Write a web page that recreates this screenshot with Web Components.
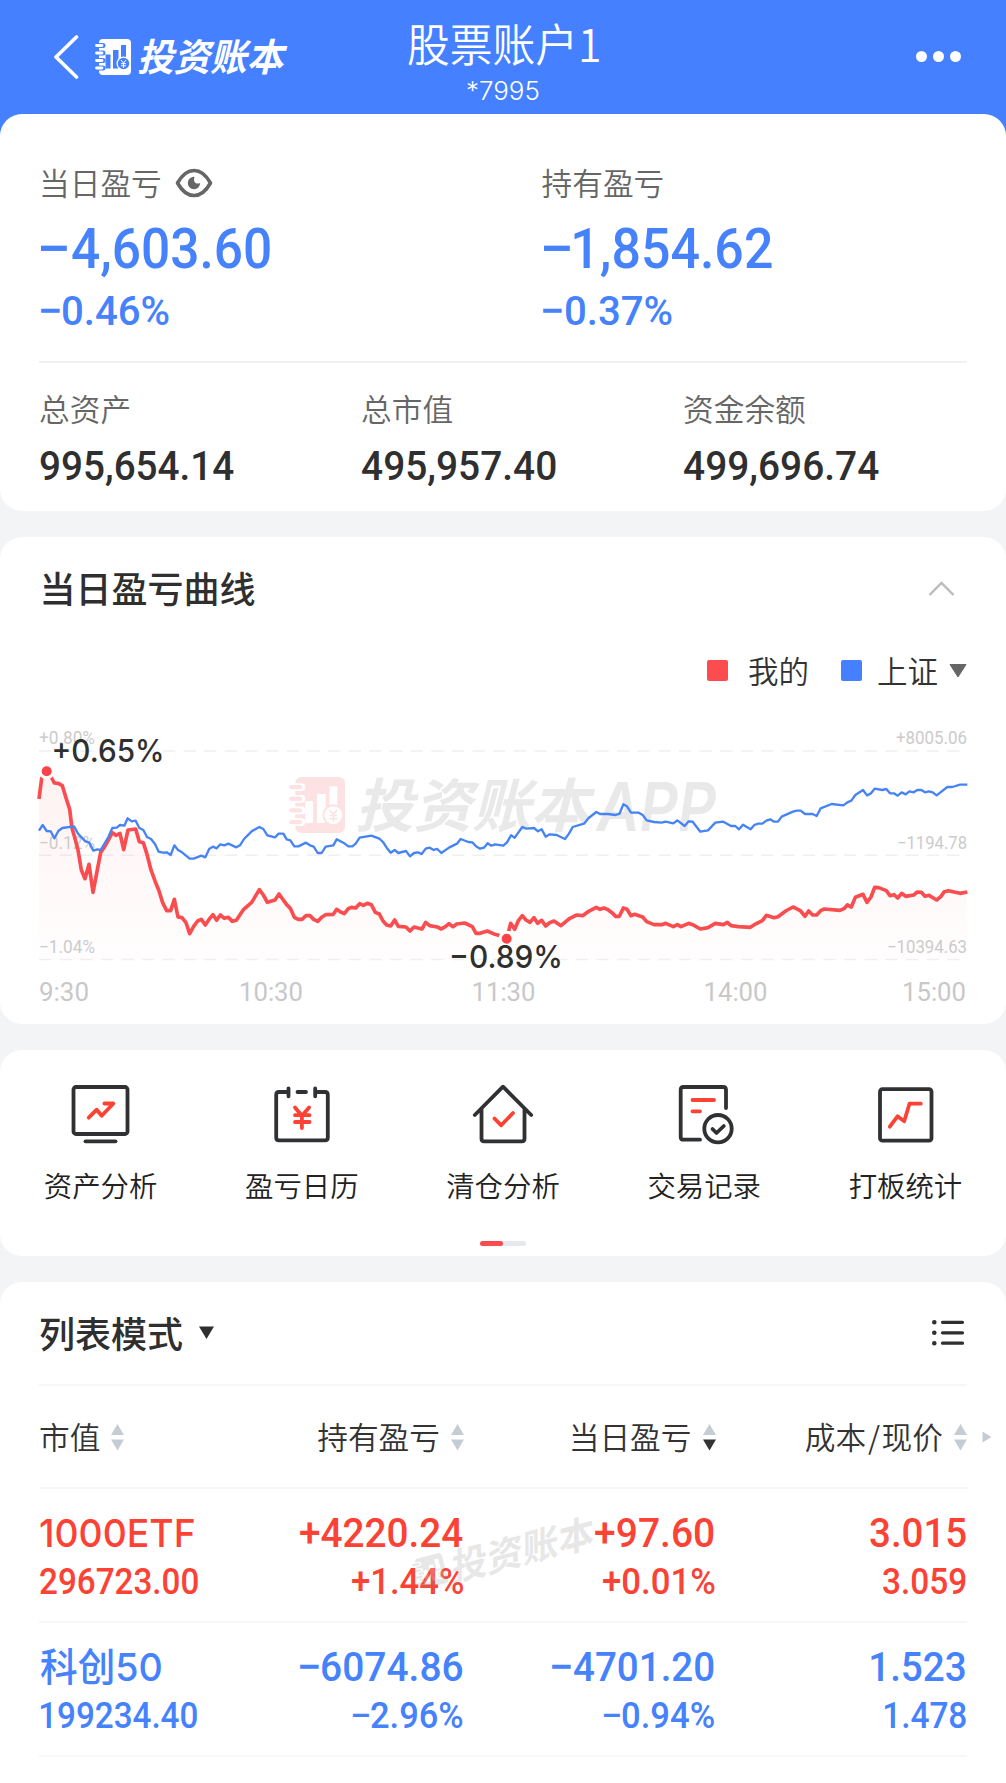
<!DOCTYPE html>
<html lang="zh-CN">
<head>
<meta charset="utf-8">
<title>投资账本</title>
<style>
html,body{margin:0;padding:0}
body{width:1006px;height:1783px;overflow:hidden;background:#f2f4f6;color:#333;
  font-family:"Noto Sans CJK SC",sans-serif;
  --blue:#4480ff;--num-blue:#4582fb;--red:#fb4235;--line:#f7f7f9;--num:Roboto,"Noto Sans CJK SC",sans-serif}
</style>
</head>
<body>
<ledger-page></ledger-page>
<script>
const define=(name,html,setup)=>{
  const tpl=document.createElement('template');
  tpl.innerHTML=html;
  customElements.define(name,class extends HTMLElement{
    connectedCallback(){
      if(this.shadowRoot)return;
      this.attachShadow({mode:'open'}).append(tpl.content.cloneNode(true));
      if(setup)setup(this,this.shadowRoot);
    }
  });
};

/* Text whose inked width equals the "w" attribute, at "s" pixels and weight "b".
   A leading minus is stretched on its own so that it stays wide beside narrow digits. */
const ctx=document.createElement('canvas').getContext('2d');
class FitText extends HTMLElement{
  connectedCallback(){
    if(this.shadowRoot)return;
    const s=+this.getAttribute('s'),w=+this.getAttribute('w'),b=this.getAttribute('b')||500;
    const fam=this.getAttribute('f')||'Roboto',h=this.getAttribute('h')||s;
    const style=this.hasAttribute('italic')?'italic':'normal';
    const text=this.getAttribute('text');
    ctx.font=`${style} ${b} ${s}px ${fam}, "Noto Sans CJK SC", sans-serif`;
    const root=this.attachShadow({mode:'open'});
    root.innerHTML=`<style>:host{display:flex;width:${w}px;height:${h}px;line-height:${h}px;white-space:nowrap;flex:none}
      span{flex:none;font-family:${fam},"Noto Sans CJK SC",sans-serif;font-size:${s}px;font-weight:${b};font-style:${style};line-height:inherit;transform-origin:0 50%}</style>`;
    const part=(t,width,gap)=>{
      const m=ctx.measureText(t),left=-m.actualBoundingBoxLeft||0;
      const k=width/(m.actualBoundingBoxRight+m.actualBoundingBoxLeft);
      const e=document.createElement('span');
      e.textContent=t;
      e.style.width=width+gap+'px';
      e.style.transform=`scaleX(${k}) translateX(${-left}px)`;
      root.append(e);
    };
    if(text[0]==='−'){
      const dash=s*.475,gap=s*.075;
      part('−',dash,gap);
      part(text.slice(1),w-dash-gap,0);
    }else part(text,w,0);
  }
}
customElements.define('fit-text',FitText);

define('book-icon',`<style>:host{display:block;flex:none}svg{display:block;width:100%;height:100%;overflow:visible}</style>
<svg viewBox="0 0 36 36">
 <rect x="4" y="0" width="32" height="36" rx="4" fill="currentColor"/>
 <g fill="none" stroke="var(--hole)" stroke-width="5"><path d="M3 6.5h5M3 14h5M3 21.500h5M3 29h5" stroke-linecap="round"/></g>
 <path d="M1.500 6.500h5.500M1.500 14h5.500M1.500 21.500h5.500M1.500 29h5.500" stroke="currentColor" stroke-width="2.800" stroke-linecap="round"/>
 <path d="M10.500 15.500h5v14h-5zM18 11h5.500v18.500h-5.500zM26 6h5v12h-5z" fill="var(--hole)"/>
 <circle cx="28.500" cy="24.500" r="7" fill="currentColor"/><circle cx="28.500" cy="24.500" r="5.700" fill="var(--hole)"/>
 <path d="M26 21l2.500 3 2.500-3M28.500 24v5M26 24.700h5M26 26.800h5" fill="none" stroke="currentColor" stroke-width="1"/>
</svg>`);

define('app-header',`<style>
:host{display:grid;grid-template-columns:1fr auto 1fr;height:114px;background:var(--blue);color:#fff}
.l{display:flex;align-items:center;padding-left:53px;height:113px}
.back{width:26px;height:44px;margin-right:16px;flex:none}
book-icon{width:36px;height:36px;--hole:var(--blue);margin-right:7px}
.c{display:flex;flex-direction:column;align-items:center}
.c fit-text:first-of-type{margin-top:21px}.c fit-text:last-of-type{margin-top:19px}
.r{display:flex;justify-content:flex-end;align-items:center;gap:6px;height:113px;padding-right:45px}
i{width:11px;height:11px;border-radius:50%;background:#fff}
</style>
<div class="l"><svg class="back" viewBox="0 0 26 44" fill="none" stroke="#fff" stroke-width="3.600" stroke-linecap="round" stroke-linejoin="round"><path d="M23.500 2L3 22l20.500 20"/></svg>
<book-icon></book-icon><fit-text text="投资账本" s="38" w="150" b="700" italic h="44" f="Noto Sans CJK SC" style="margin-top:-4px"></fit-text></div>
<div class="c"><fit-text text="股票账户1" s="45" w="191" b="350" h="44" f="Noto Sans CJK SC"></fit-text><fit-text text="*7995" s="25" w="72" b="300" h="14" f="Inter"></fit-text></div>
<div class="r"><i></i><i></i><i></i></div>`);

define('panel-card',`<style>:host{display:flex;flex-direction:column;background:#fff;border-radius:22px;box-sizing:border-box;flex:none}</style><slot></slot>`);

define('field-label',`<style>:host{display:block;font:350 30.700px/44px "Noto Sans CJK SC",sans-serif;color:#666;white-space:nowrap;margin-left:-1px}</style><slot></slot>`);

define('asset-summary',`<style>
:host{display:block;background:linear-gradient(var(--blue) 50%,transparent 50%)}
panel-card{height:397px;padding:46px 39px 0}
.two{display:grid;grid-template-columns:502.500px 1fr;padding-left:1px;height:201px;color:var(--num-blue)}
.lab{display:flex;align-items:center;gap:13px;height:44px}
.eye{width:38px;height:30px;display:block;margin-top:2px}
.big{margin:19.500px 0 0 1px}.pct{margin:15.500px 0 0 .500px}
.three{border-top:2px solid #f0f1f3;display:grid;grid-template-columns:322px 322px 1fr;padding:23px 0 0 1px;color:#2f2f2f}
.three fit-text{margin-top:14px}
</style>
<panel-card>
 <div class="two">
  <div><div class="lab"><field-label>当日盈亏</field-label><svg class="eye" viewBox="0 0 38 30"><path d="M2.500 15C7 7 12.500 2.500 19 2.500S31 7 35.500 15C31 23 25.500 27.500 19 27.500S7 23 2.500 15z" fill="none" stroke="#666" stroke-width="3.600" stroke-linejoin="round"/><path d="M19.500 8.800a6.200 6.200 0 1 0 5.700 6.200q-4 1.500-5.500-.800-1.300-2.200-.200-5.400z" fill="#666"/></svg></div>
   <fit-text class="big" text="−4,603.60" s="56" w="228.500" h="50"></fit-text><fit-text class="pct" text="−0.46%" s="41" w="128.500" h="44"></fit-text></div>
  <div><div class="lab"><field-label>持有盈亏</field-label></div>
   <fit-text class="big" text="−1,854.62" s="56" w="228.500" h="50"></fit-text><fit-text class="pct" text="−0.37%" s="41" w="128.500" h="44"></fit-text></div>
 </div>
 <div class="three">
  <div><field-label>总资产</field-label><fit-text text="995,654.14" s="41" w="194" h="44"></fit-text></div>
  <div><field-label>总市值</field-label><fit-text text="495,957.40" s="41" w="194" h="44"></fit-text></div>
  <div><field-label>资金余额</field-label><fit-text text="499,696.74" s="41" w="195" h="44"></fit-text></div>
 </div>
</panel-card>`);

const RED='117,297 125,235 140,214 152,228 163,249 175,250 187,257 197,290 209,328 216,385 224,412 234,450 244,510 255,536 267,493 279,577 302,457 314,440 325,420 337,398 348,406 360,400 371,449 384,390 407,387 418,425 430,428 441,463 453,510 465,543 476,570 488,608 500,632 512,632 523,598 534,651 546,653 558,668 569,701 581,679 593,663 604,658 616,675 628,657 639,644 650,661 661,645 673,655 685,652 697,664 709,661 731,628 755,607 778,569 790,585 802,607 825,600 837,582 860,614 871,625 883,652 895,658 906,658 918,647 930,647 941,658 953,664 965,652 977,644 1000,643 1010,628 1022,636 1033,641 1045,626 1054,622 1067,624 1079,611 1090,616 1102,610 1114,614 1126,637 1138,642 1149,663 1160,675 1172,678 1184,660 1195,679 1218,681 1230,693 1242,681 1266,687 1277,667 1289,677 1312,681 1324,687 1336,680 1347,671 1359,680 1370,672 1394,669 1417,680 1428,700 1440,700 1462,693 1485,703 1500,707 1520,716 1532,670 1544,688 1555,662 1567,647 1578,660 1590,667 1602,653 1613,670 1625,661 1637,678 1649,668 1662,663 1683,677 1708,656 1730,645 1748,647 1766,634 1789,622 1800,628 1812,624 1824,629 1836,638 1847,649 1858,649 1870,624 1881,628 1893,647 1904,643 1928,651 1940,665 1962,674 1985,674 1997,670 2020,680 2032,674 2043,680 2066,670 2078,674 2101,687 2124,683 2146,670 2170,674 2182,667 2193,677 2215,680 2251,682 2263,674 2287,662 2299,646 2322,653 2334,650 2357,633 2379,621 2402,633 2415,649 2426,633 2438,645 2450,645 2462,632 2473,627 2520,631 2532,626 2542,615 2554,621 2566,592 2589,583 2601,607 2613,591 2624,562 2636,563 2659,572 2670,587 2682,584 2693,594 2705,580 2717,589 2741,585 2752,576 2764,577 2775,589 2787,586 2810,600 2823,589 2833,575 2845,572 2880,580 2902,576';
const BLUE='117,392 128,375 140,393 152,394 163,415 175,393 187,384 222,379 234,401 256,424 268,428 280,452 292,448 302,450 325,411 337,384 350,383 360,375 373,377 383,355 395,364 407,362 418,384 430,390 441,411 453,417 465,432 476,455 488,458 500,457 512,465 523,436 534,450 546,457 569,476 581,476 604,467 616,472 628,446 639,440 650,445 661,433 673,436 685,431 709,442 720,436 732,417 755,394 778,381 790,387 802,406 825,412 836,401 850,401 860,418 871,421 883,439 895,439 918,428 930,436 941,440 953,459 965,459 977,440 1000,436 1010,418 1033,430 1045,439 1057,439 1067,431 1079,413 1114,407 1138,416 1149,426 1160,443 1172,458 1184,450 1195,459 1218,453 1230,469 1242,459 1254,457 1265,462 1277,446 1289,443 1301,450 1312,447 1324,459 1347,443 1371,431 1382,417 1405,426 1417,427 1428,439 1440,446 1452,443 1463,430 1474,437 1486,433 1510,437 1521,427 1533,406 1544,413 1567,381 1579,386 1602,384 1614,394 1625,388 1637,410 1649,403 1670,405 1695,417 1707,401 1718,381 1752,371 1766,354 1789,336 1800,342 1824,342 1847,345 1858,342 1870,313 1881,319 1893,338 1916,338 1928,345 1940,361 1962,366 1985,368 1997,365 2020,370 2032,361 2054,378 2066,364 2078,365 2101,395 2124,391 2146,368 2170,365 2193,378 2206,378 2217,388 2229,374 2252,388 2263,375 2275,371 2287,371 2299,362 2311,358 2322,365 2334,365 2345,350 2379,335 2391,332 2402,332 2415,342 2438,342 2450,348 2462,325 2495,312 2530,316 2542,307 2554,302 2566,285 2589,270 2601,286 2613,280 2624,266 2647,270 2659,267 2670,280 2682,280 2693,287 2705,277 2717,283 2728,274 2741,277 2752,270 2764,270 2775,277 2787,274 2798,277 2810,286 2842,261 2857,261 2880,254 2902,254';

define('line-chart',`<style>
:host{display:block;position:relative;width:1006px;height:310px}
svg{display:block;position:absolute;inset:0}
.mark{position:absolute;left:289px;top:76px;display:flex;align-items:center;gap:13px;color:#e9e9ea}
.mark book-icon{width:56px;height:56px;color:#fde2e4;--hole:#fff}
.ax{font:400 18px Roboto,sans-serif;fill:#cbcbcb}
.tm{font:400 26px Roboto,sans-serif;fill:#c8c8c8}
.tip{font:450 31px Inter,sans-serif;fill:#2f2f2f}
</style>
<div class="mark"><book-icon></book-icon><fit-text text="投资账本" s="58" w="238" b="700" italic h="56" f="Noto Sans CJK SC" style="margin-top:-7px"></fit-text><fit-text text="APP" s="68" w="122" b="600" italic h="56" f="Inter" style="margin:2px 0 0 -14px"></fit-text></div>
<svg width="1006" height="310" viewBox="0 0 1006 310">
 <defs><linearGradient id="g" gradientUnits="userSpaceOnUse" x1="0" y1="214" x2="0" y2="778"><stop offset="0" stop-color="#fb4d50" stop-opacity=".075"/><stop offset="1" stop-color="#fb4d50" stop-opacity=".008"/></linearGradient></defs>
 <g stroke="#f0f0f0" stroke-width="1.500" stroke-dasharray="12.400 8.240"><path d="M39 51H967M39 155.300H967M39 259.500H967"/></g>
 <g transform="scale(.33333)" fill="none">
  <polygon id="area" fill="url(#g)"/>
 </g>
 <g class="ax"></g>
 <g transform="scale(.33333)" fill="none" stroke-linejoin="round">
  <polyline id="red" stroke="#f94d50" stroke-width="11"/>
  <polyline id="blue" stroke="#4683f5" stroke-width="7"/>
  <g fill="#fb4248" stroke="#fff" stroke-width="9"><circle cx="140" cy="214" r="19.500"/><circle cx="1520" cy="716" r="19.500"/></g>
 </g>
 <g class="tm"></g><g class="tip"></g>
</svg>`,(el,r)=>{
  r.getElementById('red').setAttribute('points',RED);
  r.getElementById('blue').setAttribute('points',BLUE);
  r.getElementById('area').setAttribute('points',RED+' 2902,778 117,778');
  const put=(cls,list)=>list.forEach(([s,x,y,w])=>{
    const t=document.createElementNS('http://www.w3.org/2000/svg','text');
    t.setAttribute('x',x);t.setAttribute('y',y);t.setAttribute('textLength',w);
    t.setAttribute('lengthAdjust','spacingAndGlyphs');t.textContent=s;
    r.querySelector(cls).append(t);
  });
  put('.ax',[['+0.80%',39,44,56],['−0.12%',39,148.500,56],['−1.04%',39,253,56],['+8005.06',896,44,71],['−1194.78',897,148.500,70],['−10394.63',887,253,80]]);
  put('.tm',[['9:30',39,300.500,50],['10:30',239,300.500,64],['11:30',471.500,300.500,64],['14:00',703.500,300.500,64],['15:00',902,300.500,64]]);
  put('.tip',[['+0.65%',51.500,62,113],['−0.89%',449,268,114]]);
});

define('section-title',`<style>:host{display:block;font:500 36px/44px "Noto Sans CJK SC",sans-serif;color:#2f2f2f;white-space:nowrap}</style><slot></slot>`);

define('curve-panel',`<style>
panel-card{height:487px}
.head{display:flex;justify-content:space-between;align-items:center;height:44px;padding:28px 51px 0 39.500px}
.head svg{margin-top:3px}
.legend{display:flex;align-items:center;justify-content:flex-end;height:40px;margin:42px 39px 9px 0;font:350 30.500px/40px "Noto Sans CJK SC",sans-serif;color:#333}
.sq{width:21px;height:21px;border-radius:2px;position:relative;top:-.500px}
.legend span{position:relative;top:-1px;left:-1px}
</style>
<panel-card>
 <div class="head"><section-title>当日盈亏曲线</section-title><svg width="27" height="16" viewBox="0 0 27 16" fill="none" stroke="#bbb" stroke-width="2.400"><path d="M1.500 14L13.500 2l12 12"/></svg></div>
 <div class="legend"><i class="sq" style="background:#fb4d50;margin-right:21px"></i><span style="margin-right:31px">我的</span><i class="sq" style="background:var(--blue);margin-right:16px"></i><span style="margin-right:10px">上证</span><svg width="18" height="14" viewBox="0 0 18 14"><path d="M1 .5h16L9 13z" fill="#666" stroke="#666" stroke-linejoin="round"/></svg></div>
 <line-chart></line-chart>
</panel-card>`);

define('tool-item',`<style>:host{display:flex;flex-direction:column;align-items:center;flex:1;font:350 28.400px/40px "Noto Sans CJK SC",sans-serif;color:#222}
::slotted(svg){width:66px;height:66px;margin-bottom:19px;fill:none;stroke:#2f3133;stroke-width:3.800;stroke-linecap:round;stroke-linejoin:round}</style><slot name="icon"></slot><slot></slot>`);

define('tool-panel',`<style>
panel-card{height:206px;padding-top:30px}
.row{display:flex}
.red{stroke:#fb4235}
.dots{display:flex;width:46px;height:5px;border-radius:3px;overflow:hidden;background:#e6e7ef;margin:36px auto 0}
.dots i{width:23px;background:#fb4d50;border-radius:0 3px 3px 0}
</style>
<panel-card><div class="row">
<tool-item><svg slot="icon" viewBox="0 0 66 66"><rect x="5.500" y="7" width="54" height="47" rx="2.500"/><path d="M17.500 61.300h30"/><path class="red" d="M20.700 37.700l8-8 5 6L45.400 23.500H36.400" /></svg>资产分析</tool-item>
<tool-item><svg slot="icon" viewBox="0 0 66 66"><path d="M19.500 12H10q-2.800 0-2.800 2.800v42.700q0 2.800 2.800 2.800h46q2.800 0 2.800-2.800V14.800Q58.800 12 56 12H46.200M19.500 8.300v8M46.200 8.300v8M28.500 12h8.500"/><path class="red" d="M26 27.500l6.900 8.200 7.200-8.200M26 35.200h14.500M26 42h14.500M32.900 36v12"/></svg>盈亏日历</tool-item>
<tool-item><svg slot="icon" viewBox="0 0 66 66"><path d="M4.800 35L33 6.700 61.200 35M11.500 29v29.800q0 2.500 2.500 2.500h38q2.500 0 2.500-2.500V29"/><path class="red" d="M24.500 38.500l6.700 6.800L43 33"/></svg>清仓分析</tool-item>
<tool-item><svg slot="icon" viewBox="0 0 66 66"><path d="M55 28V9.800Q55 7 52.200 7H12.500Q9.700 7 9.700 9.800v47.100q0 2.800 2.800 2.800h16.500"/><circle cx="47" cy="48.700" r="13.700"/><path d="M41.500 49l4 4 7.300-7"/><path class="red" d="M21.500 20h21.500M21.500 31.300h7.500"/></svg>交易记录</tool-item>
<tool-item><svg slot="icon" viewBox="0 0 66 66"><rect x="8" y="9.200" width="51.500" height="51.500" rx="2.500"/><path class="red" d="M17.800 46.700L25.500 36.300l6.700 5L37.500 23.700h11.300"/></svg>打板统计</tool-item>
</div><div class="dots"><i></i></div></panel-card>`);

define('sort-head',`<style>:host{display:flex;align-items:center;gap:11px;justify-content:flex-end;font:350 30.700px/44px "Noto Sans CJK SC",sans-serif;color:#333;white-space:nowrap;--dn:#c5ccd4}
:host([start]){justify-content:flex-start;margin-left:-1px}:host([active]){--dn:#333}
svg{flex:none;margin-top:3px}span{display:block;margin-top:-1px}</style><span><slot></slot></span><svg width="13" height="27" viewBox="0 0 13 27"><path d="M6.500 0L13 11H0z" fill="#c5ccd4"/><path d="M0 15.500h13L6.500 26.500z" fill="var(--dn)"/></svg>`);

define('holding-row',`<style>:host{display:grid;grid-template-columns:260px 164px 251.500px 251.500px;height:134px;box-sizing:border-box;border-bottom:2px solid var(--line);padding:22px 0 0 1px;color:var(--c)}
div{display:flex;flex-direction:column;align-items:flex-end;gap:7px;padding-right:1.500px}div:first-of-type{align-items:flex-start}
</style><div></div><div></div><div></div><div></div>`,(el,r)=>{
  const cells=JSON.parse(el.getAttribute('cells'));
  r.querySelectorAll('div').forEach((d,i)=>cells[i].forEach(([t,w],j)=>{
    const f=document.createElement('fit-text');
    f.setAttribute('text',t);f.setAttribute('w',w);f.setAttribute('s',j?36:41);f.setAttribute('h',j?40:44);
    if(!i&&!j){f.setAttribute('f','Inter');f.setAttribute('s',38.5)}
    d.append(f);
  }));
});

define('holdings-panel',`<style>
:host{position:relative;display:block}
panel-card{height:520px;padding:0 39px}
.head{display:flex;align-items:center;height:101.500px;border-bottom:2px solid var(--line)}
.head section-title{margin:-2px 15px 0 0}
.list{margin-left:auto;margin-right:2px}
.cols{display:grid;grid-template-columns:260px 164px 251.500px 251.500px auto;align-items:center;height:101.500px;padding-left:1px;border-bottom:2px solid var(--line)}
.cols svg{margin-left:15px;margin-top:2px}
.cols b{font-weight:inherit;margin:0 1.700px}
.wm{position:absolute;left:412px;top:250px;display:flex;align-items:center;gap:4px;transform:rotate(-14.500deg);color:#8c8c8c;opacity:.2}
.wm book-icon{width:31px;height:34px;--hole:#fff}
</style>
<panel-card>
 <div class="head"><section-title>列表模式</section-title><svg width="17" height="14" viewBox="0 0 17 14"><path d="M1 .5h15L8.500 13z" fill="#2f2f2f"/></svg>
 <svg class="list" width="33" height="26" viewBox="0 0 33 26" stroke="#2f2f2f" stroke-width="3.200" stroke-linecap="round"><path d="M10.500 2.300h20M10.500 12.800h20M10.500 23.200h20"/><path d="M2.300 2.300h.01M2.300 12.800h.01M2.300 23.200h.01" stroke-width="4.600"/></svg></div>
 <div class="cols"><sort-head start>市值</sort-head><sort-head>持有盈亏</sort-head><sort-head active>当日盈亏</sort-head><sort-head>成本<b>/</b>现价</sort-head><svg width="10" height="12" viewBox="0 0 10 12"><path d="M.5.5L9.500 6 .5 11.500z" fill="#c5ccd4"/></svg></div>
 <holding-row style="--c:var(--red)" cells='[[["1000ETF",154],["296723.00",158]],[["+4220.24",163],["+1.44%",111]],[["+97.60",119],["+0.01%",111.5]],[["3.015",96],["3.059",83]]]'></holding-row>
 <holding-row style="--c:var(--num-blue)" cells='[[["科创50",121],["199234.40",157]],[["−6074.86",163],["−2.96%",111]],[["−4701.20",162.5],["−0.94%",111.5]],[["1.523",94.5],["1.478",82]]]'></holding-row>
</panel-card>
<div class="wm"><book-icon></book-icon><fit-text text="投资账本" s="37" w="150" b="700" h="40" f="Noto Sans CJK SC" italic></fit-text></div>`);

define('ledger-page',`<style>:host{display:flex;flex-direction:column;width:1006px}
curve-panel,holdings-panel{margin-top:26px}tool-panel{margin-top:26px}curve-panel,tool-panel,app-header,asset-summary{flex:none}</style>
<app-header></app-header><asset-summary></asset-summary><curve-panel style="display:block"></curve-panel><tool-panel style="display:block"></tool-panel><holdings-panel></holdings-panel>`);
</script>
</body>
</html>
